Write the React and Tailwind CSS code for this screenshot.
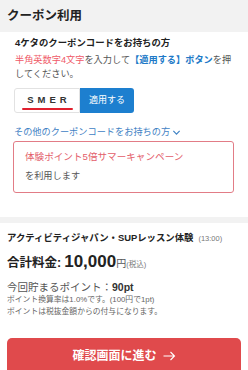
import React from "react";

function ChevronDown() {
  return (
    <svg width="9" height="9" viewBox="0 0 10 10" className="ml-[2px] inline-block">
      <path d="M1.5 3.2 5 6.8 8.5 3.2" fill="none" stroke="#3f82c4" strokeWidth="1.3" />
    </svg>
  );
}

function CouponSection() {
  return (
    <div className="px-[14px] pt-[4px] pb-[24px]">
      <p className="pl-[1px] text-[9.4px] leading-[13px] font-bold text-[#222]">
        4ケタのクーポンコードをお持ちの方
      </p>
      <div className="mt-[4px] pl-[1px] text-[9.2px] leading-[14px] text-[#555]">
        <p>
          <span className="text-[#ef5a68]">半角英数字4文字</span>を入力して<span className="font-semibold text-[#2079c7]">【適用する】ボタン</span>を押
        </p>
        <p>してください。</p>
      </div>

      {/* coupon input */}
      <div className="mt-[7px] flex h-[25px]">
        <div className="flex w-[66px] flex-col items-center justify-center rounded-l-[3px] border border-[#e2e2e2] bg-white pt-[2px]">
          <span className="pl-[4px] text-[9.5px] leading-[12px] font-bold tracking-[0.42em] text-[#333]">SMER</span>
          <span className="mt-[2px] h-[2px] w-[51px] rounded-full bg-[#e0202e]"></span>
        </div>
        <button className="w-[54px] rounded-r-[3px] bg-[#1d7fcf] text-[9px] text-white">適用する</button>
      </div>

      <p className="mt-[13px] flex items-center text-[9.2px] leading-[13px] text-[#3f82c4]">
        その他のクーポンコードをお持ちの方
        <ChevronDown />
      </p>

      <div className="mt-[2px] ml-[-1px] rounded-[3px] border border-[#e27c86] px-[11px] pt-[8px] pb-[9px]">
        <p className="text-[9.6px] leading-[13px] text-[#e35d6a]">体験ポイント5倍サマーキャンペーン</p>
        <p className="mt-[7px] text-[9.2px] leading-[13px] text-[#555]">を利用します</p>
      </div>
    </div>
  );
}

function Summary() {
  return (
    <div className="px-[7px] pt-[8px]">
      <p className="text-[9.4px] leading-[13px] font-semibold text-[#222]">
        アクティビティジャパン・SUPレッスン体験
        <span className="ml-[5px] text-[7.5px] font-normal text-[#777]">(13:00)</span>
      </p>
      <p className="mt-[7px] flex items-baseline leading-[20px] text-[#222]">
        <span className="text-[12.5px] font-bold">合計料金:</span>
        <span className="ml-[3px] text-[17px] font-bold">10,000</span>
        <span className="text-[10px] text-[#555]">円</span>
        <span className="text-[7.5px] text-[#777]">(税込)</span>
      </p>
      <p className="mt-[5px] text-[10.5px] leading-[14px] text-[#555]">
        今回貯まるポイント：<span className="font-bold text-[#333]">90pt</span>
      </p>
      <p className="text-[7.8px] leading-[12px] text-[#666]">ポイント換算率は1.0%です。(100円で1pt)</p>
      <p className="text-[7.8px] leading-[12px] text-[#666]">ポイントは税抜金額からの付与になります。</p>

      <button className="mt-[20px] flex h-[38px] w-full items-center justify-center gap-[6px] rounded-[5px] bg-[#e04a4c] pb-[2px] text-[12px] font-bold text-white">
        確認画面に進む
        <svg width="13" height="10" viewBox="0 0 13 10">
          <path d="M0.5 5h11M7.5 1l4 4-4 4" fill="none" stroke="white" strokeWidth="1.1" />
        </svg>
      </button>
    </div>
  );
}

export default function App() {
  return (
    <div className="min-h-[370px] w-[248px] overflow-hidden bg-white font-[Liberation_Sans,Noto_Sans_CJK_JP,sans-serif]">
      <div className="flex h-8 items-center bg-[#f2f2f2] pl-[7px]">
        <h1 className="text-[12.5px] font-bold text-[#222]">クーポン利用</h1>
      </div>
      <CouponSection />
      <div className="h-[6px] bg-[#f2f2f2]"></div>
      <Summary />
    </div>
  );
}
